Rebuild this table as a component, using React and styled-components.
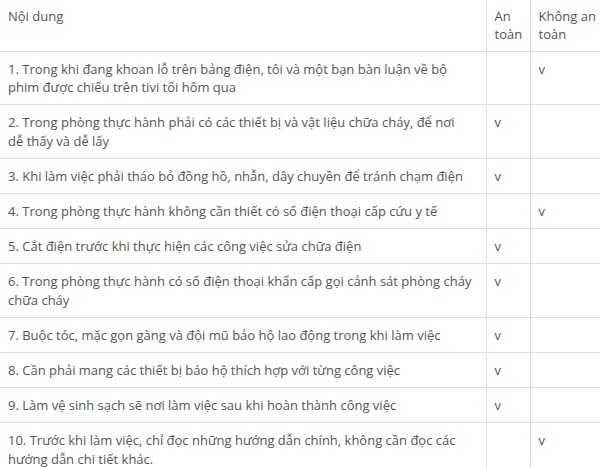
import React from "react";
import styled, { createGlobalStyle } from "styled-components";

const GlobalStyle = createGlobalStyle`
  html, body {
    margin: 0;
    padding: 0;
    background: #ffffff;
    overflow: hidden;
  }
`;

const Table = styled.table`
  width: 604px;
  border-collapse: collapse;
  table-layout: fixed;
  font-family: "Open Sans", "Liberation Sans", sans-serif;
  font-size: 13px;
  line-height: 18.2px;
  color: #555555;
`;

const HeadCell = styled.th`
  text-align: left;
  font-weight: normal;
  vertical-align: top;
  padding: 6.6px 8px 8px;
  border-bottom: 1px solid #dddddd;
  border-left: ${(p) => (p.first ? "none" : "1px solid #dddddd")};
`;

const Cell = styled.td`
  vertical-align: top;
  padding: 8px;
  padding-right: ${(p) => (p.first ? "14px" : "8px")};
  border-top: 1px solid #dddddd;
  border-left: ${(p) => (p.first ? "none" : "1px solid #dddddd")};
`;

const rows = [
  ["1. Trong khi đang khoan lỗ trên bảng điện, tôi và một bạn bàn luận về bộ phim được chiếu trên tivi tối hôm qua", false],
  ["2. Trong phòng thực hành phải có các thiết bị và vật liệu chữa cháy, để nơi dễ thấy và dễ lấy", true],
  ["3. Khi làm việc phải tháo bỏ đồng hồ, nhẫn, dây chuyền để tránh chạm điện", true],
  ["4. Trong phòng thực hành không cần thiết có số điện thoại cấp cứu y tế", false],
  ["5. Cắt điện trước khi thực hiện các công việc sửa chữa điện", true],
  ["6. Trong phòng thực hành có số điện thoại khẩn cấp gọi cảnh sát phòng cháy chữa cháy", true],
  ["7. Buộc tóc, mặc gọn gàng và đội mũ bảo hộ lao động trong khi làm việc", true],
  ["8. Cần phải mang các thiết bị báo hộ thích hợp với từng công việc", true],
  ["9. Làm vệ sinh sạch sẽ nơi làm việc sau khi hoàn thành công việc", true],
  ["10. Trước khi làm việc, chỉ đọc những hướng dẫn chính, không cần đọc các hướng dẫn chi tiết khác.", false],
];

const App = () => {
  return (
    <>
      <GlobalStyle />
      <Table>
        <colgroup>
          <col style={{ width: 486 }} />
          <col style={{ width: 44 }} />
          <col style={{ width: 74 }} />
        </colgroup>
        <thead>
          <tr>
            <HeadCell first>Nội dung</HeadCell>
            <HeadCell>An toàn</HeadCell>
            <HeadCell>Không an toàn</HeadCell>
          </tr>
        </thead>
        <tbody>
          {rows.map(([text, safe]) => (
            <tr key={text}>
              <Cell first>{text}</Cell>
              <Cell>{safe ? "v" : ""}</Cell>
              <Cell>{safe ? "" : "v"}</Cell>
            </tr>
          ))}
        </tbody>
      </Table>
    </>
  );
};

export default App;
